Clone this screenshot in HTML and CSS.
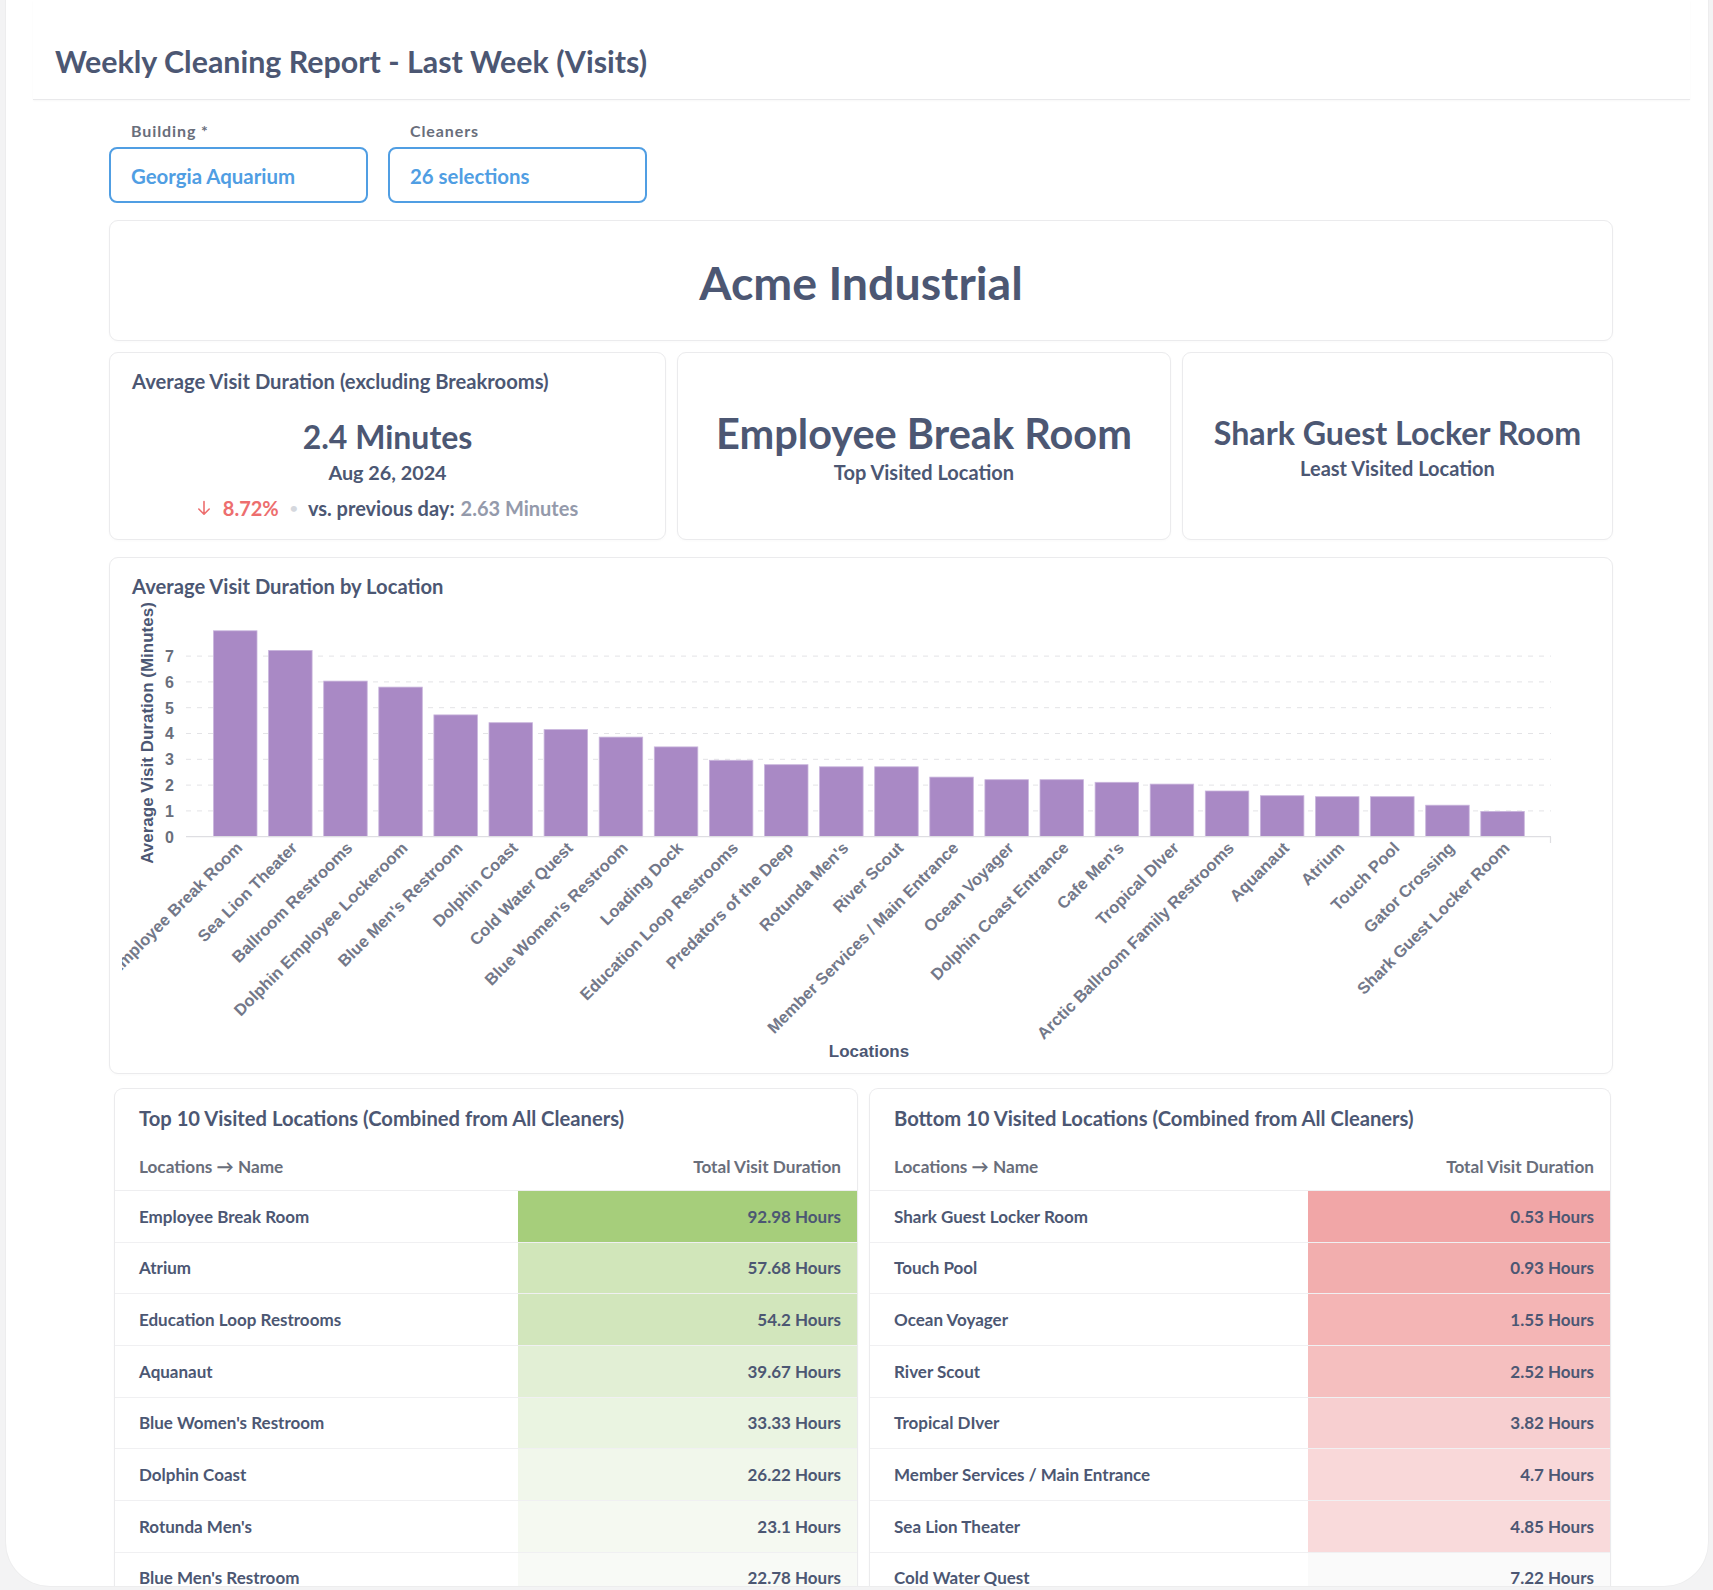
FILE: index.html
```html
<!DOCTYPE html>
<html lang="en">
<head>
<meta charset="utf-8">
<title>Weekly Cleaning Report</title>
<link rel="stylesheet" href="styles.css">
</head>
<body>
<div class="frame">
  <header class="header">
    <h1 class="page-title">Weekly Cleaning Report - Last Week (Visits)</h1>
  </header>
  <main class="content">
    <section class="filters">
      <div class="filter">
        <div class="filter-label">Building *</div>
        <div class="filter-box">Georgia Aquarium</div>
      </div>
      <div class="filter">
        <div class="filter-label">Cleaners</div>
        <div class="filter-box">26 selections</div>
      </div>
    </section>

    <section class="card heading-card">
      <div class="heading-text">Acme Industrial</div>
    </section>

    <section class="kpi-row">
      <div class="card kpi-trend">
        <div class="card-title">Average Visit Duration (excluding Breakrooms)</div>
        <div class="trend-value">2.4 Minutes</div>
        <div class="trend-date">Aug 26, 2024</div>
        <div class="trend-compare">
          <svg class="down-arrow" width="14" height="16" viewBox="0 0 14 16"><path d="M7 1.5v12.5M1.8 9l5.2 5.2L12.2 9" fill="none" stroke="#ed6e6e" stroke-width="1.6" stroke-linecap="round" stroke-linejoin="round"/></svg>
          <span class="pct">8.72%</span>
          <span class="dot">•</span>
          <span class="vs">vs. previous day:</span>
          <span class="prev">2.63 Minutes</span>
        </div>
      </div>
      <div class="card kpi-scalar">
        <div class="scalar-big big-40">Employee Break Room</div>
        <div class="scalar-sub">Top Visited Location</div>
      </div>
      <div class="card kpi-scalar">
        <div class="scalar-big big-32">Shark Guest Locker Room</div>
        <div class="scalar-sub">Least Visited Location</div>
      </div>
    </section>

    <section class="card chart-card">
      <div class="card-title chart-title">Average Visit Duration by Location</div>
      <svg class="chart" width="1478" height="466" viewBox="0 0 1478 466">
        <g class="grid">
          <line x1="64" y1="211.9" x2="1429" y2="211.9"/>
          <line x1="64" y1="186.1" x2="1429" y2="186.1"/>
          <line x1="64" y1="160.3" x2="1429" y2="160.3"/>
          <line x1="64" y1="134.5" x2="1429" y2="134.5"/>
          <line x1="64" y1="108.7" x2="1429" y2="108.7"/>
          <line x1="64" y1="82.9" x2="1429" y2="82.9"/>
          <line x1="64" y1="57.1" x2="1429" y2="57.1"/>
        </g>
        <g class="ticks">
          <text x="52" y="243.5">0</text>
          <text x="52" y="217.7">1</text>
          <text x="52" y="191.9">2</text>
          <text x="52" y="166.1">3</text>
          <text x="52" y="140.3">4</text>
          <text x="52" y="114.5">5</text>
          <text x="52" y="88.7">6</text>
          <text x="52" y="62.9">7</text>
        </g>
        <g class="bars">
          <rect x="91.5" y="31.8" width="43.5" height="205.9"/>
          <rect x="146.6" y="51.4" width="43.5" height="186.3"/>
          <rect x="201.7" y="82.1" width="43.5" height="155.6"/>
          <rect x="256.8" y="88.1" width="43.5" height="149.6"/>
          <rect x="311.9" y="115.9" width="43.5" height="121.8"/>
          <rect x="367.0" y="123.7" width="43.5" height="114.0"/>
          <rect x="422.1" y="130.6" width="43.5" height="107.1"/>
          <rect x="477.2" y="138.1" width="43.5" height="99.6"/>
          <rect x="532.3" y="147.9" width="43.5" height="89.8"/>
          <rect x="587.4" y="161.3" width="43.5" height="76.4"/>
          <rect x="642.5" y="165.7" width="43.5" height="72.0"/>
          <rect x="697.6" y="167.8" width="43.5" height="69.9"/>
          <rect x="752.7" y="167.8" width="43.5" height="69.9"/>
          <rect x="807.8" y="178.1" width="43.5" height="59.6"/>
          <rect x="862.9" y="180.7" width="43.5" height="57.0"/>
          <rect x="918.0" y="180.7" width="43.5" height="57.0"/>
          <rect x="973.1" y="183.3" width="43.5" height="54.4"/>
          <rect x="1028.2" y="185.1" width="43.5" height="52.6"/>
          <rect x="1083.3" y="192.0" width="43.5" height="45.7"/>
          <rect x="1138.4" y="196.7" width="43.5" height="41.0"/>
          <rect x="1193.5" y="197.7" width="43.5" height="40.0"/>
          <rect x="1248.6" y="197.7" width="43.5" height="40.0"/>
          <rect x="1303.7" y="206.2" width="43.5" height="31.5"/>
          <rect x="1358.8" y="212.4" width="43.5" height="25.3"/>
        </g>
        <line class="axis" x1="64" y1="237.7" x2="1429" y2="237.7"/>
        <line class="axis" x1="1428.5" y1="237.7" x2="1428.5" y2="244"/>
        <g class="xlabels">
          <text x="121.3" y="250" transform="rotate(-45 121.3 250)">Employee Break Room</text>
          <text x="176.4" y="250" transform="rotate(-45 176.4 250)">Sea Lion Theater</text>
          <text x="231.5" y="250" transform="rotate(-45 231.5 250)">Ballroom Restrooms</text>
          <text x="286.6" y="250" transform="rotate(-45 286.6 250)">Dolphin Employee Lockeroom</text>
          <text x="341.7" y="250" transform="rotate(-45 341.7 250)">Blue Men's Restroom</text>
          <text x="396.8" y="250" transform="rotate(-45 396.8 250)">Dolphin Coast</text>
          <text x="451.9" y="250" transform="rotate(-45 451.9 250)">Cold Water Quest</text>
          <text x="507.0" y="250" transform="rotate(-45 507.0 250)">Blue Women's Restroom</text>
          <text x="562.1" y="250" transform="rotate(-45 562.1 250)">Loading Dock</text>
          <text x="617.2" y="250" transform="rotate(-45 617.2 250)">Education Loop Restrooms</text>
          <text x="672.3" y="250" transform="rotate(-45 672.3 250)">Predators of the Deep</text>
          <text x="727.4" y="250" transform="rotate(-45 727.4 250)">Rotunda Men's</text>
          <text x="782.5" y="250" transform="rotate(-45 782.5 250)">River Scout</text>
          <text x="837.6" y="250" transform="rotate(-45 837.6 250)">Member Services / Main Entrance</text>
          <text x="892.7" y="250" transform="rotate(-45 892.7 250)">Ocean Voyager</text>
          <text x="947.8" y="250" transform="rotate(-45 947.8 250)">Dolphin Coast Entrance</text>
          <text x="1002.9" y="250" transform="rotate(-45 1002.9 250)">Cafe Men's</text>
          <text x="1058.0" y="250" transform="rotate(-45 1058.0 250)">Tropical DIver</text>
          <text x="1113.1" y="250" transform="rotate(-45 1113.1 250)">Arctic Ballroom Family Restrooms</text>
          <text x="1168.2" y="250" transform="rotate(-45 1168.2 250)">Aquanaut</text>
          <text x="1223.3" y="250" transform="rotate(-45 1223.3 250)">Atrium</text>
          <text x="1278.4" y="250" transform="rotate(-45 1278.4 250)">Touch Pool</text>
          <text x="1333.5" y="250" transform="rotate(-45 1333.5 250)">Gator Crossing</text>
          <text x="1388.6" y="250" transform="rotate(-45 1388.6 250)">Shark Guest Locker Room</text>
        </g>
        <text class="axis-title" x="25" y="134" transform="rotate(-90 25 134)" dy="0.35em">Average Visit Duration (Minutes)</text>
        <text class="axis-title" x="747" y="452" dy="0.35em">Locations</text>
      </svg>
    </section>

    <section class="tables-row">
      <div class="card table-card left-table">
        <div class="card-title table-title">Top 10 Visited Locations (Combined from All Cleaners)</div>
        <div class="tbl">
          <div class="tr th"><div class="td name">Locations → Name</div><div class="td val">Total Visit Duration</div></div>
          <div class="tr"><div class="td name">Employee Break Room</div><div class="td val g1">92.98 Hours</div></div>
          <div class="tr"><div class="td name">Atrium</div><div class="td val g2">57.68 Hours</div></div>
          <div class="tr"><div class="td name">Education Loop Restrooms</div><div class="td val g3">54.2 Hours</div></div>
          <div class="tr"><div class="td name">Aquanaut</div><div class="td val g4">39.67 Hours</div></div>
          <div class="tr"><div class="td name">Blue Women's Restroom</div><div class="td val g5">33.33 Hours</div></div>
          <div class="tr"><div class="td name">Dolphin Coast</div><div class="td val g6">26.22 Hours</div></div>
          <div class="tr"><div class="td name">Rotunda Men's</div><div class="td val g7">23.1 Hours</div></div>
          <div class="tr"><div class="td name">Blue Men's Restroom</div><div class="td val g8">22.78 Hours</div></div>
        </div>
      </div>
      <div class="card table-card right-table">
        <div class="card-title table-title">Bottom 10 Visited Locations (Combined from All Cleaners)</div>
        <div class="tbl">
          <div class="tr th"><div class="td name">Locations → Name</div><div class="td val">Total Visit Duration</div></div>
          <div class="tr"><div class="td name">Shark Guest Locker Room</div><div class="td val r1">0.53 Hours</div></div>
          <div class="tr"><div class="td name">Touch Pool</div><div class="td val r2">0.93 Hours</div></div>
          <div class="tr"><div class="td name">Ocean Voyager</div><div class="td val r3">1.55 Hours</div></div>
          <div class="tr"><div class="td name">River Scout</div><div class="td val r4">2.52 Hours</div></div>
          <div class="tr"><div class="td name">Tropical DIver</div><div class="td val r5">3.82 Hours</div></div>
          <div class="tr"><div class="td name">Member Services / Main Entrance</div><div class="td val r6">4.7 Hours</div></div>
          <div class="tr"><div class="td name">Sea Lion Theater</div><div class="td val r7">4.85 Hours</div></div>
          <div class="tr"><div class="td name">Cold Water Quest</div><div class="td val r8">7.22 Hours</div></div>
        </div>
      </div>
    </section>
  </main>
</div>
</body>
</html>
```

FILE: styles.css
```css
* { box-sizing: border-box; }

html, body {
  margin: 0;
  padding: 0;
}

body {
  background: #f3f3f4;
  font-family: Lato, "Noto Sans", sans-serif;
  color: #4c5773;
  height: 1590px;
  overflow: hidden;
}

.frame {
  margin: 0 5px 0 6px;
  height: 1586px;
  background: #ffffff;
  border-radius: 0 0 44px 44px;
  overflow: hidden;
  box-shadow: 0 0 0 1px rgba(0, 0, 0, 0.025);
}

.header {
  margin: 0 18px 0 27px;
  padding: 43px 0 0 22px;
  height: 100px;
  border-bottom: 1px solid #e9e9eb;
  box-shadow: 0 1px 2px rgba(0, 0, 0, 0.03);
}

.page-title {
  margin: 0;
  font-size: 30.4px;
  line-height: 36px;
  font-weight: 700;
  color: #4c5773;
}

.content {
  margin-left: 103px;
  width: 1504px;
}

/* Filters */
.filters {
  display: flex;
  gap: 20px;
  padding-top: 22px;
}

.filter-label {
  margin-left: 22px;
  font-size: 16px;
  line-height: 18px;
  font-weight: 700;
  color: #696e7b;
  letter-spacing: 0.9px;
  margin-bottom: 7px;
}

.filter-box {
  width: 259px;
  height: 56px;
  border: 2px solid #509ee3;
  border-radius: 8px;
  padding: 2px 0 0 20px;
  display: flex;
  align-items: center;
  font-size: 20.4px;
  font-weight: 700;
  color: #509ee3;
}

/* Cards */
.card {
  background: #ffffff;
  border: 1px solid #ebebed;
  border-radius: 9px;
  box-shadow: 0 1px 3px rgba(0, 0, 0, 0.025);
}

.card-title {
  font-size: 20.2px;
  line-height: 24px;
  font-weight: 700;
  color: #4c5773;
}

.heading-card {
  margin-top: 17px;
  height: 121px;
  display: flex;
  align-items: center;
  justify-content: center;
}

.heading-text {
  font-size: 46.5px;
  font-weight: 700;
  line-height: 56px;
  color: #4c5773;
  padding-top: 2px;
}

/* KPI row */
.kpi-row {
  margin-top: 11px;
  display: grid;
  grid-template-columns: 557px 494px 431px;
  column-gap: 11px;
  height: 188px;
}

.kpi-trend {
  padding: 16px 22px 0 22px;
  display: flex;
  flex-direction: column;
}

.trend-value {
  margin-top: 24px;
  text-align: center;
  font-size: 32px;
  line-height: 40px;
  font-weight: 700;
}

.trend-date {
  margin-top: 3px;
  text-align: center;
  font-size: 19.8px;
  line-height: 24px;
  font-weight: 700;
}

.trend-compare {
  margin-top: 12px;
  display: flex;
  justify-content: center;
  align-items: center;
  font-size: 20px;
  line-height: 24px;
  font-weight: 700;
}

.down-arrow { margin-right: 12px; }
.pct { color: #ed6e6e; }
.dot { color: #d5d8de; margin: 0 10px 0 11px; font-size: 14px; }
.vs { color: #4c5773; margin-right: 6px; }
.prev { color: #949aab; }

.kpi-scalar {
  display: flex;
  flex-direction: column;
  align-items: center;
  justify-content: center;
}

.scalar-big {
  font-weight: 700;
  color: #4c5773;
  white-space: nowrap;
}

.big-40 {
  font-size: 41.5px;
  line-height: 48px;
}

.big-32 {
  font-size: 32.2px;
  line-height: 40px;
}

.scalar-sub {
  margin-top: 3px;
  font-size: 20px;
  line-height: 24px;
  font-weight: 700;
  color: #4c5773;
}

/* Chart */
.chart-card {
  margin-top: 17px;
  height: 517px;
  padding: 16px 12px 0 12px;
}

.chart-title {
  padding-left: 10px;
}

.chart {
  display: block;
  margin-top: 1px;
  overflow: hidden;
}

.chart .grid line {
  stroke: #e3e3e6;
  stroke-width: 1;
  stroke-dasharray: 5 6;
}

.chart .axis {
  stroke: #dedee2;
  stroke-width: 1.2;
}

.chart .bars rect {
  fill: #a989c5;
  stroke: #c9b5dc;
  stroke-width: 0.8;
}

.chart .ticks text {
  font-family: "Liberation Sans", Arial, sans-serif;
  font-size: 16px;
  font-weight: 700;
  fill: #696e7b;
  text-anchor: end;
}

.chart .xlabels text {
  font-family: "Liberation Sans", Arial, sans-serif;
  font-size: 16.5px;
  font-weight: 700;
  fill: #737889;
  text-anchor: end;
}

.chart .axis-title {
  font-family: "Liberation Sans", Arial, sans-serif;
  font-size: 17px;
  font-weight: 700;
  fill: #4c5773;
  text-anchor: middle;
}

/* Tables */
.tables-row {
  margin-top: 14px;
  margin-left: 5px;
  display: grid;
  grid-template-columns: 744px 742px;
  column-gap: 11px;
}

.table-card {
  height: 560px;
  overflow: hidden;
  border-bottom: none;
}

.table-title {
  padding: 17px 24px 0 24px;
  height: 56px;
}

.tbl {
  display: flex;
  flex-direction: column;
}

.tr {
  display: grid;
  height: 51.67px;
  border-bottom: 1px solid #f0f0f2;
}

.left-table .tr { grid-template-columns: 403px 1fr; }
.right-table .tr { grid-template-columns: 438px 1fr; }

.tr.th {
  height: 46px;
  padding-bottom: 3px;
  border-bottom: 1px solid #eeeef0;
}

.td {
  display: flex;
  align-items: center;
  font-size: 17px;
  font-weight: 700;
  color: #4c5773;
  white-space: nowrap;
}

.td.name { padding-left: 24px; }
.td.val { justify-content: flex-end; padding-right: 16px; }

.th .td {
  font-size: 17.2px;
  color: #696e7b;
}

.g1 { background: #a6ce7b; }
.g2 { background: #d1e6ba; }
.g3 { background: #d2e6bc; }
.g4 { background: #e2efd5; }
.g5 { background: #eaf4e1; }
.g6 { background: #f1f7eb; }
.g7 { background: #f5f9f1; }
.g8 { background: #f8faf6; }

.r1 { background: #f1a6a7; }
.r2 { background: #f2aeae; }
.r3 { background: #f4b5b5; }
.r4 { background: #f5bfbf; }
.r5 { background: #f7cfd0; }
.r6 { background: #f9d8d9; }
.r7 { background: #f9dadb; }
.r8 { background: #fafafa; }
```
